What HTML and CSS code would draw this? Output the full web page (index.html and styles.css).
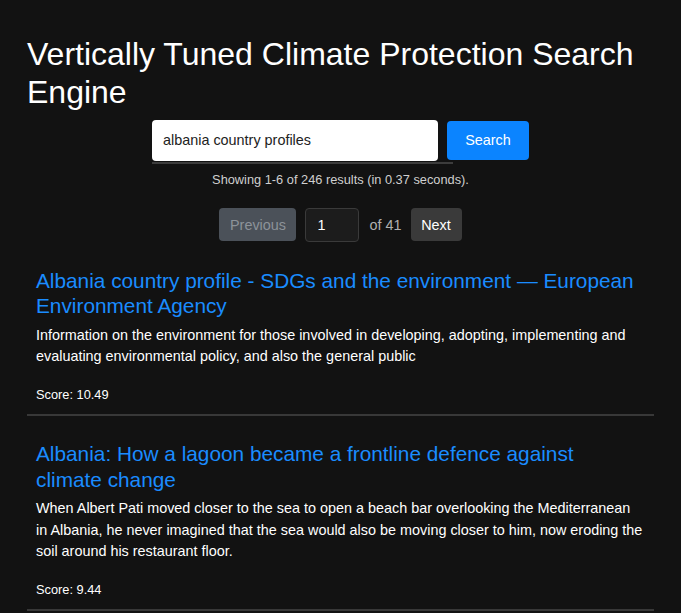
FILE: index.html
```html
<!DOCTYPE html>
<html lang="en">
<head>
<meta charset="utf-8">
<title>Vertically Tuned Climate Protection Search Engine</title>
<link rel="stylesheet" href="styles.css">
</head>
<body>
<div class="page">
  <h1 class="title">Vertically Tuned Climate Protection Search Engine</h1>
  <form class="search">
    <div class="field">
      <input class="query" type="text" value="albania country profiles">
    </div>
    <button class="search-btn" type="button">Search</button>
  </form>
  <p class="status">Showing 1-6 of 246 results (in 0.37 seconds).</p>
  <div class="pager">
    <button class="pbtn prev" type="button">Previous</button>
    <input class="page-input" type="text" value="1">
    <span class="of">of 41</span>
    <button class="pbtn next" type="button">Next</button>
  </div>
  <div class="results">
    <div class="result">
      <a class="r-title" href="#">Albania country profile - SDGs and the environment — European Environment Agency</a>
      <p class="r-desc">Information on the environment for those involved in developing, adopting, implementing and evaluating environmental policy, and also the general public</p>
      <p class="r-score">Score: 10.49</p>
    </div>
    <div class="result">
      <a class="r-title" href="#">Albania: How a lagoon became a frontline defence against climate change</a>
      <p class="r-desc">When Albert Pati moved closer to the sea to open a beach bar overlooking the Mediterranean in Albania, he never imagined that the sea would also be moving closer to him, now eroding the soil around his restaurant floor.</p>
      <p class="r-score">Score: 9.44</p>
    </div>
  </div>
</div>
</body>
</html>
```
FILE: styles.css
```css
html, body {
  margin: 0;
  padding: 0;
  background: #121212;
}
body {
  font-family: "Liberation Sans", Arial, sans-serif;
  color: #ffffff;
}
.page {
  padding: 35px 27px 0;
}
.title {
  margin: 0;
  font-size: 32px;
  line-height: 38.4px;
  font-weight: normal;
  color: #ffffff;
}
.search {
  display: flex;
  justify-content: center;
  align-items: center;
  gap: 9px;
  margin-top: 8px;
}
.field {
  position: relative;
}
.field::after {
  content: "";
  position: absolute;
  left: 0;
  top: 42px;
  width: 301px;
  height: 2px;
  background: #3c3c3c;
}
.query {
  display: block;
  box-sizing: border-box;
  width: 286px;
  height: 41px;
  margin: 0;
  padding: 0 11px;
  border: none;
  border-radius: 4px;
  background: #ffffff;
  color: #222222;
  font-family: "Liberation Sans", Arial, sans-serif;
  font-size: 14.4px;
}
.search-btn {
  box-sizing: border-box;
  width: 82px;
  height: 39px;
  border: none;
  border-radius: 4px;
  background: #0b84ff;
  color: #ffffff;
  font-family: "Liberation Sans", Arial, sans-serif;
  font-size: 14.4px;
}
.status {
  margin: 9px 0 0;
  text-align: center;
  font-size: 12.8px;
  line-height: 19px;
  color: #cfcfcf;
}
.pager {
  display: flex;
  justify-content: center;
  align-items: center;
  margin-top: 19px;
}
.pbtn {
  box-sizing: border-box;
  height: 33px;
  border: none;
  border-radius: 4px;
  font-family: "Liberation Sans", Arial, sans-serif;
  font-size: 14.4px;
  padding: 0;
}
.prev {
  width: 77px;
  background: #4b5159;
  color: #8d9399;
}
.page-input {
  box-sizing: border-box;
  width: 54px;
  height: 34px;
  margin: 0 0 0 9px;
  padding: 0 11px;
  border: 1px solid #3a3a3a;
  border-radius: 4px;
  background: #1c1c1c;
  color: #ffffff;
  font-family: "Liberation Sans", Arial, sans-serif;
  font-size: 14.4px;
}
.of {
  margin-left: 10px;
  font-size: 14.4px;
  color: #b0b0b0;
}
.next {
  width: 51px;
  margin-left: 9px;
  background: #3a3a3a;
  color: #ffffff;
}
.result {
  padding: 26px 9px 0;
  border-bottom: 2px solid #383838;
}
.result + .result {
  padding-top: 25px;
}
.r-title {
  display: block;
  font-size: 20.8px;
  line-height: 25.5px;
  color: #1a8cff;
  text-decoration: none;
}
.r-desc {
  margin: 6px 0 0;
  font-size: 14.4px;
  line-height: 21.6px;
  color: #ffffff;
}
.r-score {
  margin: 17px 0 0;
  padding-bottom: 10px;
  font-size: 12.8px;
  line-height: 19px;
  color: #ffffff;
}
```
